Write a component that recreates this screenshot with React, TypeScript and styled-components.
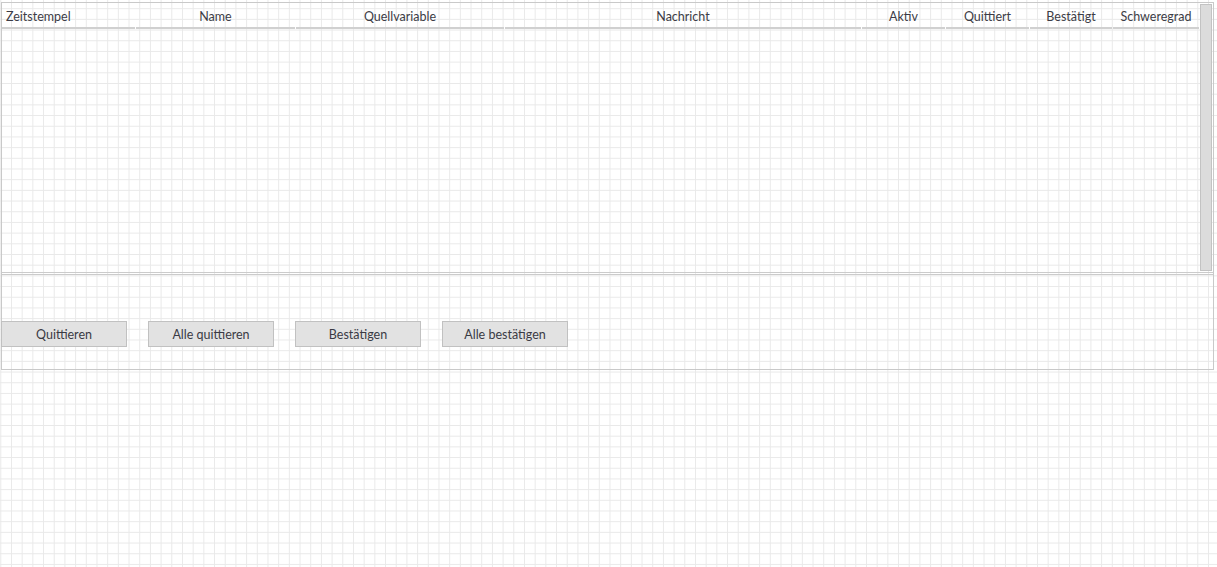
import React from "react";
import styled, { createGlobalStyle } from "styled-components";

const GlobalStyle = createGlobalStyle`
  html, body {
    margin: 0;
    padding: 0;
    width: 100%;
    height: 100%;
  }
  body {
    font-family: Lato, "Liberation Sans", sans-serif;
    background-color: #ffffff;
    background-image:
      linear-gradient(to right, #e9e9e9 1px, transparent 1px),
      linear-gradient(to bottom, #e9e9e9 1px, transparent 1px);
    background-size: 10.7px 10.7px;
    background-position: 0.3px 8.2px;
  }
`;

const Page = styled.div`
  padding: 2px 0 0 1px;
  height: 565px;
  box-sizing: border-box;
`;

const Panel = styled.div`
  width: 1213px;
  height: 368px;
  box-sizing: border-box;
  border: 1px solid #c9c9c9;
  display: flex;
  flex-direction: column;
`;

const TableArea = styled.div`
  height: 272px;
  flex-shrink: 0;
  box-sizing: border-box;
  border-bottom: 3px double #cbcbcb;
  display: flex;
  flex-direction: row;
`;

const Columns = styled.div`
  flex: 1;
  display: flex;
  flex-direction: column;
`;

const HeaderRow = styled.div`
  display: grid;
  grid-template-columns: 134px 160px 209px 357px 84px 84px 83px 87px;
  height: 26px;
`;

const HeaderCell = styled.div<{ $align?: "left" | "center" }>`
  display: flex;
  align-items: center;
  justify-content: ${(p) => (p.$align === "left" ? "flex-start" : "center")};
  padding-left: ${(p) => (p.$align === "left" ? "4px" : "0")};
  margin: 0 1px 0 0;
  border-bottom: 2px solid #d0d0d0;
  font-size: 12.5px;
  color: #3c3c46;
  white-space: nowrap;
  padding-top: 2px;
`;

const Body = styled.div`
  flex: 1;
`;

const Scrollbar = styled.div`
  width: 12px;
  margin: 1px 1px 1px 0;
  background: #dcdcdc;
  border: 1px solid #c3c3c3;
`;

const Footer = styled.div`
  flex: 1;
  display: flex;
  align-items: flex-start;
  gap: 21px;
  padding-top: 46px;
  margin-left: -1px;
`;

const Button = styled.button`
  width: 126px;
  height: 26px;
  box-sizing: border-box;
  background: #e2e2e2;
  border: 1px solid #c1c1c1;
  font-family: Lato, "Liberation Sans", sans-serif;
  font-size: 12.5px;
  color: #3a3a44;
  padding: 1px 0 0;
  cursor: pointer;
`;

const columns: { label: string; align?: "left" | "center" }[] = [
  { label: "Zeitstempel", align: "left" },
  { label: "Name" },
  { label: "Quellvariable" },
  { label: "Nachricht" },
  { label: "Aktiv" },
  { label: "Quittiert" },
  { label: "Bestätigt" },
  { label: "Schweregrad" },
];

const buttons = ["Quittieren", "Alle quittieren", "Bestätigen", "Alle bestätigen"];

export default function App() {
  return (
    <>
      <GlobalStyle />
      <Page>
        <Panel>
          <TableArea>
            <Columns>
              <HeaderRow>
                {columns.map((c) => (
                  <HeaderCell key={c.label} $align={c.align}>
                    {c.label}
                  </HeaderCell>
                ))}
              </HeaderRow>
              <Body />
            </Columns>
            <Scrollbar />
          </TableArea>
          <Footer>
            {buttons.map((b) => (
              <Button key={b}>{b}</Button>
            ))}
          </Footer>
        </Panel>
      </Page>
    </>
  );
}
